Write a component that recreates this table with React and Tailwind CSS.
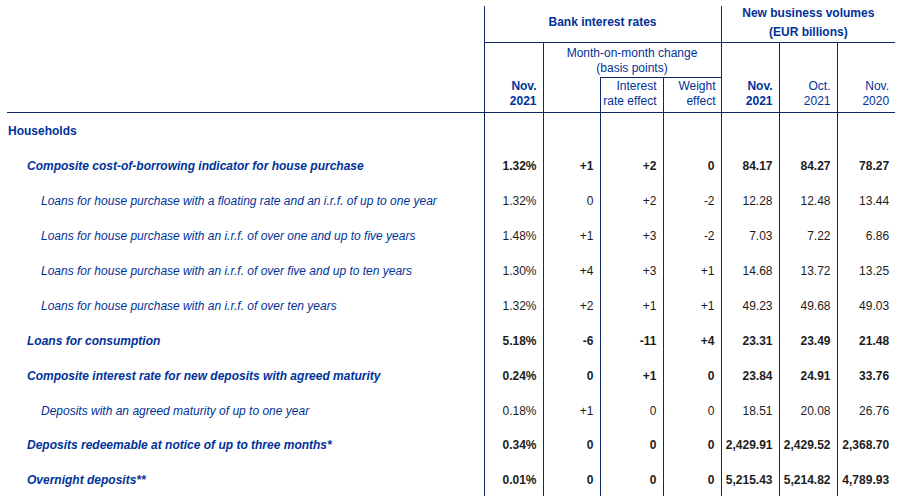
const rows = [
  { label: "Households", level: 0, h: "h-[35px]" },
  {
    label: "Composite cost-of-borrowing indicator for house purchase",
    level: 1,
    h: "h-[35px]",
    values: ["1.32%", "+1", "+2", "0", "84.17", "84.27", "78.27"],
  },
  {
    label: "Loans for house purchase with a floating rate and an i.r.f. of up to one year",
    level: 2,
    h: "h-[35px]",
    values: ["1.32%", "0", "+2", "-2", "12.28", "12.48", "13.44"],
  },
  {
    label: "Loans for house purchase with an i.r.f. of over one and up to five years",
    level: 2,
    h: "h-[35px]",
    values: ["1.48%", "+1", "+3", "-2", "7.03", "7.22", "6.86"],
  },
  {
    label: "Loans for house purchase with an i.r.f. of over five and up to ten years",
    level: 2,
    h: "h-[35px]",
    values: ["1.30%", "+4", "+3", "+1", "14.68", "13.72", "13.25"],
  },
  {
    label: "Loans for house purchase with an i.r.f. of over ten years",
    level: 2,
    h: "h-[35px]",
    values: ["1.32%", "+2", "+1", "+1", "49.23", "49.68", "49.03"],
  },
  {
    label: "Loans for consumption",
    level: 1,
    h: "h-[35px]",
    values: ["5.18%", "-6", "-11", "+4", "23.31", "23.49", "21.48"],
  },
  {
    label: "Composite interest rate for new deposits with agreed maturity",
    level: 1,
    h: "h-[35px]",
    values: ["0.24%", "0", "+1", "0", "23.84", "24.91", "33.76"],
  },
  {
    label: "Deposits with an agreed maturity of up to one year",
    level: 2,
    h: "h-[34px]",
    values: ["0.18%", "+1", "0", "0", "18.51", "20.08", "26.76"],
  },
  {
    label: "Deposits redeemable at notice of up to three months*",
    level: 1,
    h: "h-[35px]",
    values: ["0.34%", "0", "0", "0", "2,429.91", "2,429.52", "2,368.70"],
  },
  {
    label: "Overnight deposits**",
    level: 1,
    h: "h-[34px]",
    values: ["0.01%", "0", "0", "0", "5,215.43", "5,214.82", "4,789.93"],
  },
];

const labelStyle = {
  0: "pl-[1px] font-bold",
  1: "pl-[20px] font-bold italic",
  2: "pl-[34px] italic",
};

const line = "border-[#0d2866]";

export default function App() {
  return (
    <div className="h-[502px] w-[900px] bg-white pt-[6px] font-['Liberation_Sans',Arial,sans-serif] text-[12px] text-[#003299]">
      <table className="ml-[7px] w-[888px] table-fixed border-collapse">
        <colgroup>
          <col className="w-[477px]" />
          <col className="w-[59px]" />
          <col className="w-[57px]" />
          <col className="w-[63px]" />
          <col className="w-[58px]" />
          <col className="w-[58px]" />
          <col className="w-[58px]" />
          <col className="w-[58px]" />
        </colgroup>
        <thead>
          <tr className="h-[36px]">
            <th rowSpan={3} className={`border-b ${line} p-0`} />
            <th
              colSpan={4}
              className={`border-b border-l ${line} p-0 pt-[9px] align-top font-bold leading-[14px]`}
            >
              Bank interest rates
            </th>
            <th
              colSpan={3}
              className={`border-b border-l ${line} p-0 align-top font-bold leading-[19px]`}
            >
              <div className="-mt-[2px]">
                New business volumes
                <br />
                (EUR billions)
              </div>
            </th>
          </tr>
          <tr className="h-[35px]">
            <th
              rowSpan={2}
              className={`border-b border-l ${line} p-0 pr-[6px] pb-[3px] text-right align-bottom font-bold leading-[15px]`}
            >
              Nov.
              <br />
              2021
            </th>
            <th
              colSpan={3}
              className={`border-l ${line} p-0 pt-[3px] align-top font-normal leading-[15px]`}
            >
              Month-on-month change
              <br />
              (basis points)
            </th>
            <th
              rowSpan={2}
              className={`border-b border-l ${line} p-0 pr-[6px] pb-[3px] text-right align-bottom font-bold leading-[15px]`}
            >
              Nov.
              <br />
              2021
            </th>
            <th
              rowSpan={2}
              className={`border-b border-l ${line} p-0 pr-[6px] pb-[3px] text-right align-bottom font-normal leading-[15px]`}
            >
              Oct.
              <br />
              2021
            </th>
            <th
              rowSpan={2}
              className={`border-b border-l ${line} p-0 pr-[6px] pb-[3px] text-right align-bottom font-normal leading-[15px]`}
            >
              Nov.
              <br />
              2020
            </th>
          </tr>
          <tr className="h-[35px]">
            <th className={`border-b border-l ${line} p-0`} />
            <th
              className={`border-t border-b border-l ${line} p-0 pr-[6px] pb-[3px] text-right align-bottom font-normal leading-[15px]`}
            >
              Interest
              <br />
              rate effect
            </th>
            <th
              className={`border-t border-b border-l ${line} p-0 pr-[5px] pb-[3px] text-right align-bottom font-normal leading-[15px]`}
            >
              Weight
              <br />
              effect
            </th>
          </tr>
        </thead>
        <tbody>
          {rows.map((row) => (
            <tr key={row.label} className={row.h}>
              <td className={`p-0 pt-[2px] align-middle leading-[14px] whitespace-nowrap ${labelStyle[row.level]}`}>
                {row.label}
              </td>
              {Array.from({ length: 7 }).map((_, i) => (
                <td
                  key={i}
                  className={`border-l ${line} p-0 pt-[2px] pr-[6px] text-right align-middle leading-[14px] text-[#1c1c1c] ${
                    row.level === 1 ? "font-bold" : "font-normal"
                  }`}
                >
                  {row.values ? row.values[i] : ""}
                </td>
              ))}
            </tr>
          ))}
        </tbody>
      </table>
    </div>
  );
}
